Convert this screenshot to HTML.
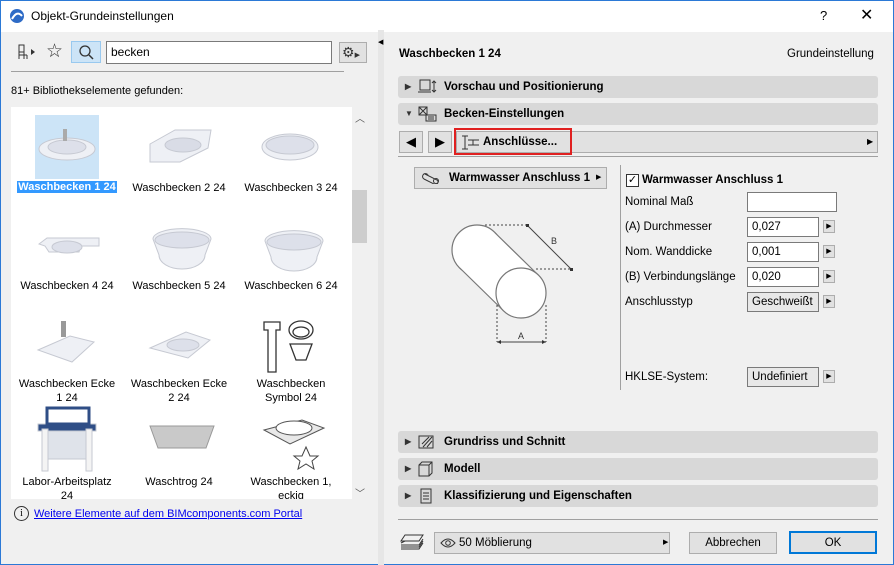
<!DOCTYPE html><html><head><style>
*{margin:0;padding:0;box-sizing:border-box}
body{width:894px;height:565px;background:#f0f0f0;font-family:"Liberation Sans",sans-serif;font-size:11.5px;color:#000;position:relative;overflow:hidden}
.a{position:absolute}
.bar{position:absolute;left:398px;width:480px;height:22px;background:#d8d8d8;border-radius:3px;font-weight:bold;font-size:11.5px;line-height:22px;padding-left:46px}
.bar .t{position:absolute;left:7px;top:0;font-size:8px;color:#333}
.bar svg{position:absolute;left:20px;top:3px}
.lab{position:absolute;width:112px;text-align:center;font-size:11px;line-height:14px;white-space:nowrap}
.inp{position:absolute;left:747px;width:72px;height:20px;background:#fff;border:1px solid #7a7a7a;padding-left:4px;line-height:18px;font-size:11.5px}
.ab{position:absolute;left:823px;width:12px;height:13px;background:#e1e1e1;border:1px solid #adadad;font-size:7px;line-height:11px;text-align:center}
.fl{position:absolute;left:625px;font-size:11.5px}
.btn{position:absolute;background:#e1e1e1;border:1px solid #adadad;text-align:center;line-height:20px;font-size:11.5px}
</style></head><body>
<div class="a" style="left:0;top:0;width:894px;height:565px;border:1px solid #2b79d6"></div>
<div class="a" style="left:1px;top:1px;width:892px;height:31px;background:#fff"></div>
<svg class="a" style="left:9px;top:8px" width="16" height="16"><circle cx="8" cy="8" r="7" fill="#2e6bc6"/><path d="M3 11 Q8 2 13 8" stroke="#fff" stroke-width="2" fill="none"/></svg>
<div class="a" style="left:31px;top:9px;font-size:12px">Objekt-Grundeinstellungen</div>
<div class="a" style="left:820px;top:8px;font-size:13px">?</div>
<div class="a" style="left:860px;top:5px;font-size:16px">✕</div>
<svg class="a" style="left:16px;top:43px" width="24" height="18"><path d="M3 2h5v7h-5zM3 9v7M8 9v7M3 12h8M11 12v4" stroke="#333" fill="none"/><path d="M15 6l4 3-4 3z" fill="#333"/></svg>
<div class="a" style="left:46px;top:40px;font-size:19px;color:#333">☆</div>
<div class="a" style="left:71px;top:41px;width:30px;height:22px;background:#cce4f7;border:1px solid #99c9ef"></div>
<svg class="a" style="left:78px;top:44px" width="16" height="16"><circle cx="7" cy="7" r="5" stroke="#333" fill="none" stroke-width="1.3"/><path d="M11 11l4 4" stroke="#333" stroke-width="1.5"/></svg>
<div class="a" style="left:106px;top:41px;width:226px;height:23px;background:#fff;border:1px solid #7a7a7a;padding-left:4px;line-height:21px;font-size:12px">becken</div>
<div class="a" style="left:339px;top:42px;width:28px;height:21px;background:#e1e1e1;border:1px solid #adadad;font-size:14px;line-height:19px;padding-left:2px;color:#333">⚙<span style="font-size:7px">▶</span></div>
<div class="a" style="left:378px;top:30px;width:6px;height:535px;background:#e6e6e6"></div>
<div class="a" style="left:378px;top:38px;font-size:7px">◀</div>
<div class="a" style="left:11px;top:71px;width:333px;height:1px;background:#a0a0a0"></div>
<div class="a" style="left:11px;top:85px;font-size:11px">81+ Bibliothekselemente gefunden:</div>
<div class="a" style="left:11px;top:107px;width:341px;height:392px;background:#fff;overflow:hidden">
<div class="a" style="left:24px;top:8px;width:64px;height:64px;background:#cce4f7"></div>
<svg class="a" style="left:0;top:0" width="341" height="392" fill="#eef0f5" stroke="#c6c9d2">
<ellipse cx="56" cy="42" rx="28" ry="11"/><ellipse cx="56" cy="40" rx="19" ry="7" fill="#dde0ea"/><rect x="52" y="22" width="4" height="12" fill="#aaa" stroke="none"/>
<path d="M139 37l25-14h36l-3 18-28 14h-30z"/><ellipse cx="172" cy="38" rx="18" ry="7" fill="#d9dce6"/>
<ellipse cx="279" cy="40" rx="28" ry="13"/><ellipse cx="279" cy="38" rx="24" ry="9" fill="#dde0ea"/>
<path d="M28 137l8-6h52v8h-18l-2 6h-30l-4-6z"/><ellipse cx="56" cy="140" rx="15" ry="6" fill="#dde0ea"/>
<path d="M142 132a28 10 0 0 1 58 0l-6 16a23 14 0 0 1-46 0z"/><ellipse cx="171" cy="133" rx="27" ry="8" fill="#dde0ea"/>
<path d="M254 134a28 10 0 0 1 58 0l-6 16a23 14 0 0 1-46 0z"/><ellipse cx="283" cy="135" rx="27" ry="8" fill="#dde0ea"/>
<path d="M27 243l32-14 24 6-22 20z"/><rect x="50" y="214" width="5" height="16" fill="#999" stroke="none"/>
<path d="M139 241l36-16 24 8-22 18z"/><ellipse cx="172" cy="238" rx="16" ry="6" fill="#dde0ea"/>
<g fill="none" stroke="#333" stroke-width="1.3"><path d="M253 215h16v8h-4v42h-8v-42h-4z"/><ellipse cx="290" cy="223" rx="12" ry="9"/><ellipse cx="290" cy="225" rx="8" ry="5"/><path d="M279 237h22l-6 16h-10z"/></g>
<rect x="31" y="322" width="50" height="30" fill="#dfe3ea"/><rect x="27" y="317" width="58" height="7" fill="#2f4e86"/><rect x="31" y="322" width="6" height="42" fill="#f4f4f4"/><rect x="75" y="322" width="6" height="42" fill="#f4f4f4"/><rect x="36" y="301" width="42" height="16" fill="none" stroke="#2f4e86" stroke-width="3"/>
<path d="M139 319l8 22h48l8-22z" fill="#c9c9c9" stroke="#999"/>
<path d="M253 323l38-10 22 8-34 16z" fill="#e8e8e8" stroke="#555"/><ellipse cx="283" cy="321" rx="18" ry="7" fill="#fff" stroke="#555"/><path d="M295 340l4 9 8 0-6 5 2 8-8-5-8 5 2-8-6-5 8 0z" fill="#fff" stroke="#444"/>
</svg>
<div class="a" style="left:3px;top:74px;width:106px;text-align:center;white-space:nowrap"><span style="background:#3399ff;color:#fff;font-weight:bold;padding:0 1px;font-size:11px">Waschbecken 1 24</span></div>
<div class="lab" style="left:112px;top:74px">Waschbecken 2 24</div>
<div class="lab" style="left:224px;top:74px">Waschbecken 3 24</div>
<div class="lab" style="left:0;top:172px">Waschbecken 4 24</div>
<div class="lab" style="left:112px;top:172px">Waschbecken 5 24</div>
<div class="lab" style="left:224px;top:172px">Waschbecken 6 24</div>
<div class="lab" style="left:0;top:270px">Waschbecken Ecke<br>1 24</div>
<div class="lab" style="left:112px;top:270px">Waschbecken Ecke<br>2 24</div>
<div class="lab" style="left:224px;top:270px">Waschbecken<br>Symbol 24</div>
<div class="lab" style="left:0;top:368px">Labor-Arbeitsplatz<br>24</div>
<div class="lab" style="left:112px;top:368px">Waschtrog 24</div>
<div class="lab" style="left:224px;top:368px">Waschbecken 1,<br>eckig</div>
</div>
<div class="a" style="left:352px;top:107px;width:15px;height:392px;background:#f0f0f0"></div>
<div class="a" style="left:352px;top:190px;width:15px;height:53px;background:#cdcdcd"></div>
<div class="a" style="left:355px;top:110px;font-size:10px;color:#555">︿</div>
<div class="a" style="left:355px;top:485px;font-size:10px;color:#555">﹀</div>
<div class="a" style="left:14px;top:506px;width:15px;height:15px;border:1px solid #333;border-radius:50%;font-size:10px;text-align:center;line-height:13px;font-family:'Liberation Serif',serif">i</div>
<div class="a" style="left:34px;top:508px;font-size:11px;color:#0000ee;text-decoration:underline">Weitere Elemente auf dem BIMcomponents.com Portal</div>
<div class="a" style="left:399px;top:48px;font-weight:bold">Waschbecken 1 24</div>
<div class="a" style="left:787px;top:48px">Grundeinstellung</div>
<div class="bar" style="top:76px"><span class="t">▶</span><svg width="20" height="16"><rect x="2" y="1" width="10" height="10" fill="none" stroke="#333"/><path d="M0 13h13M16 2v11M14 4l2-2 2 2M14 11l2 2 2-2" stroke="#333" fill="none"/></svg>Vorschau und Positionierung</div>
<div class="bar" style="top:103px"><span class="t">▼</span><svg width="20" height="16"><rect x="1" y="1" width="8" height="8" fill="none" stroke="#333"/><path d="M1 1l8 8M9 1l-8 8M8 9h10v6h-10zM10 11h6M10 13h6" stroke="#333" fill="none"/></svg>Becken-Einstellungen</div>
<div class="btn" style="left:399px;top:131px;width:24px;height:22px;font-size:13px">◀</div>
<div class="btn" style="left:428px;top:131px;width:24px;height:22px;font-size:13px">▶</div>
<div class="a" style="left:456px;top:131px;width:422px;height:22px;background:#e1e1e1;border:1px solid #adadad"></div>
<div class="a" style="left:454px;top:128px;width:118px;height:27px;border:2px solid #e02020"></div>
<svg class="a" style="left:461px;top:135px" width="20" height="16"><path d="M1 1h6M4 1v13M1 14h6M7 5h5v5h-5M12 5h6M12 10h6" stroke="#333" fill="none"/></svg>
<div class="a" style="left:483px;top:136px;font-weight:bold">Anschlüsse...</div>
<div class="a" style="left:867px;top:137px;font-size:8px">▶</div>
<div class="a" style="left:398px;top:156px;width:480px;height:1px;background:#a0a0a0"></div>
<div class="btn" style="left:414px;top:167px;width:193px;height:22px;text-align:left;padding-left:34px;font-weight:bold;white-space:nowrap">Warmwasser Anschluss 1<span style="position:absolute;left:181px;font-size:7px;font-weight:normal">▶</span></div>
<svg class="a" style="left:422px;top:172px" width="20" height="12"><path d="M3 2l12 6a2.5 2.5 0 0 1-3 4l-10-5a2.5 2.5 0 0 1 3-5z" stroke="#333" fill="none"/><ellipse cx="14" cy="9" rx="2.5" ry="2.5" fill="none" stroke="#333"/></svg>
<svg class="a" style="left:0;top:0" width="894" height="565" fill="none" stroke="#777" stroke-width="1.2">
<circle cx="477" cy="250" r="25" fill="#fff"/>
<polygon points="494.7,232.5 538.7,275.5 503.3,310.5 459.3,267.5" fill="#fff" stroke="none"/>
<path d="M494.7 232.5L538.7 275.5M459.3 267.5L503.3 310.5"/>
<circle cx="521" cy="293" r="25" fill="#fff"/>
<g stroke="#444" stroke-width="1"><path d="M485 225h43M536 269h35M497 305v37M546 305v37" stroke-dasharray="2 2"/>
<path d="M528 226L571 269M497 342h49"/></g>
<path d="M497 342l4-2v4zM546 342l-4-2v4z" fill="#333" stroke="none"/>
<rect x="526" y="224" width="3" height="3" fill="#333" stroke="none"/><rect x="570" y="268" width="3" height="3" fill="#333" stroke="none"/>
</svg>
<div class="a" style="left:551px;top:236px;font-size:9px;color:#333">B</div>
<div class="a" style="left:518px;top:331px;font-size:9px;color:#333">A</div>
<div class="a" style="left:620px;top:165px;width:1px;height:225px;background:#a0a0a0"></div>
<div class="a" style="left:626px;top:174px;width:13px;height:13px;background:#fff;border:1px solid #333;font-size:11px;line-height:11px;text-align:center">✓</div>
<div class="a" style="left:642px;top:174px;font-weight:bold">Warmwasser Anschluss 1</div>
<div class="fl" style="top:196px">Nominal Maß</div><div class="inp" style="top:192px;width:90px"></div>
<div class="fl" style="top:221px">(A) Durchmesser</div><div class="inp" style="top:217px">0,027</div><div class="ab" style="top:220px">▶</div>
<div class="fl" style="top:246px">Nom. Wanddicke</div><div class="inp" style="top:242px">0,001</div><div class="ab" style="top:245px">▶</div>
<div class="fl" style="top:271px">(B) Verbindungslänge</div><div class="inp" style="top:267px">0,020</div><div class="ab" style="top:270px">▶</div>
<div class="fl" style="top:296px">Anschlusstyp</div><div class="inp" style="top:292px;background:#e8e8e8">Geschweißt</div><div class="ab" style="top:295px">▶</div>
<div class="fl" style="top:371px">HKLSE-System:</div><div class="inp" style="top:367px;background:#e8e8e8">Undefiniert</div><div class="ab" style="top:370px">▶</div>
<div class="bar" style="top:431px"><span class="t">▶</span><svg width="20" height="16"><rect x="1" y="2" width="14" height="12" fill="none" stroke="#333"/><path d="M5 13l9-10M9 13l5-6M4 10l7-7" stroke="#333"/></svg>Grundriss und Schnitt</div>
<div class="bar" style="top:458px"><span class="t">▶</span><svg width="20" height="16"><path d="M1 4l3-3h10v11l-3 3h-10zM1 4h10v11M11 4l3-3" stroke="#333" fill="none"/></svg>Modell</div>
<div class="bar" style="top:485px"><span class="t">▶</span><svg width="20" height="16"><path d="M3 1h10v14h-10zM5 5h6M5 8h6M5 11h6" stroke="#333" fill="none"/></svg>Klassifizierung und Eigenschaften</div>
<div class="a" style="left:398px;top:519px;width:480px;height:1px;background:#a0a0a0"></div>
<svg class="a" style="left:399px;top:533px" width="26" height="18"><path d="M6 2h18l-4 6h-18zM2 10l4-2M2 12h18l4-6M2 14h18l4-6M2 16h18l4-6" stroke="#333" fill="none"/></svg>
<div class="btn" style="left:434px;top:532px;width:236px;height:22px;text-align:left;padding-left:24px">50 Möblierung<span style="position:absolute;left:228px;font-size:7px">▶</span></div>
<svg class="a" style="left:440px;top:538px" width="16" height="10"><path d="M1 5q7-8 14 0q-7 8-14 0z" stroke="#333" fill="none"/><circle cx="8" cy="5" r="2.3" fill="none" stroke="#333"/></svg>
<div class="btn" style="left:689px;top:532px;width:88px;height:22px">Abbrechen</div>
<div class="btn" style="left:789px;top:531px;width:88px;height:23px;border:2px solid #0078d7">OK</div>
</body></html>
